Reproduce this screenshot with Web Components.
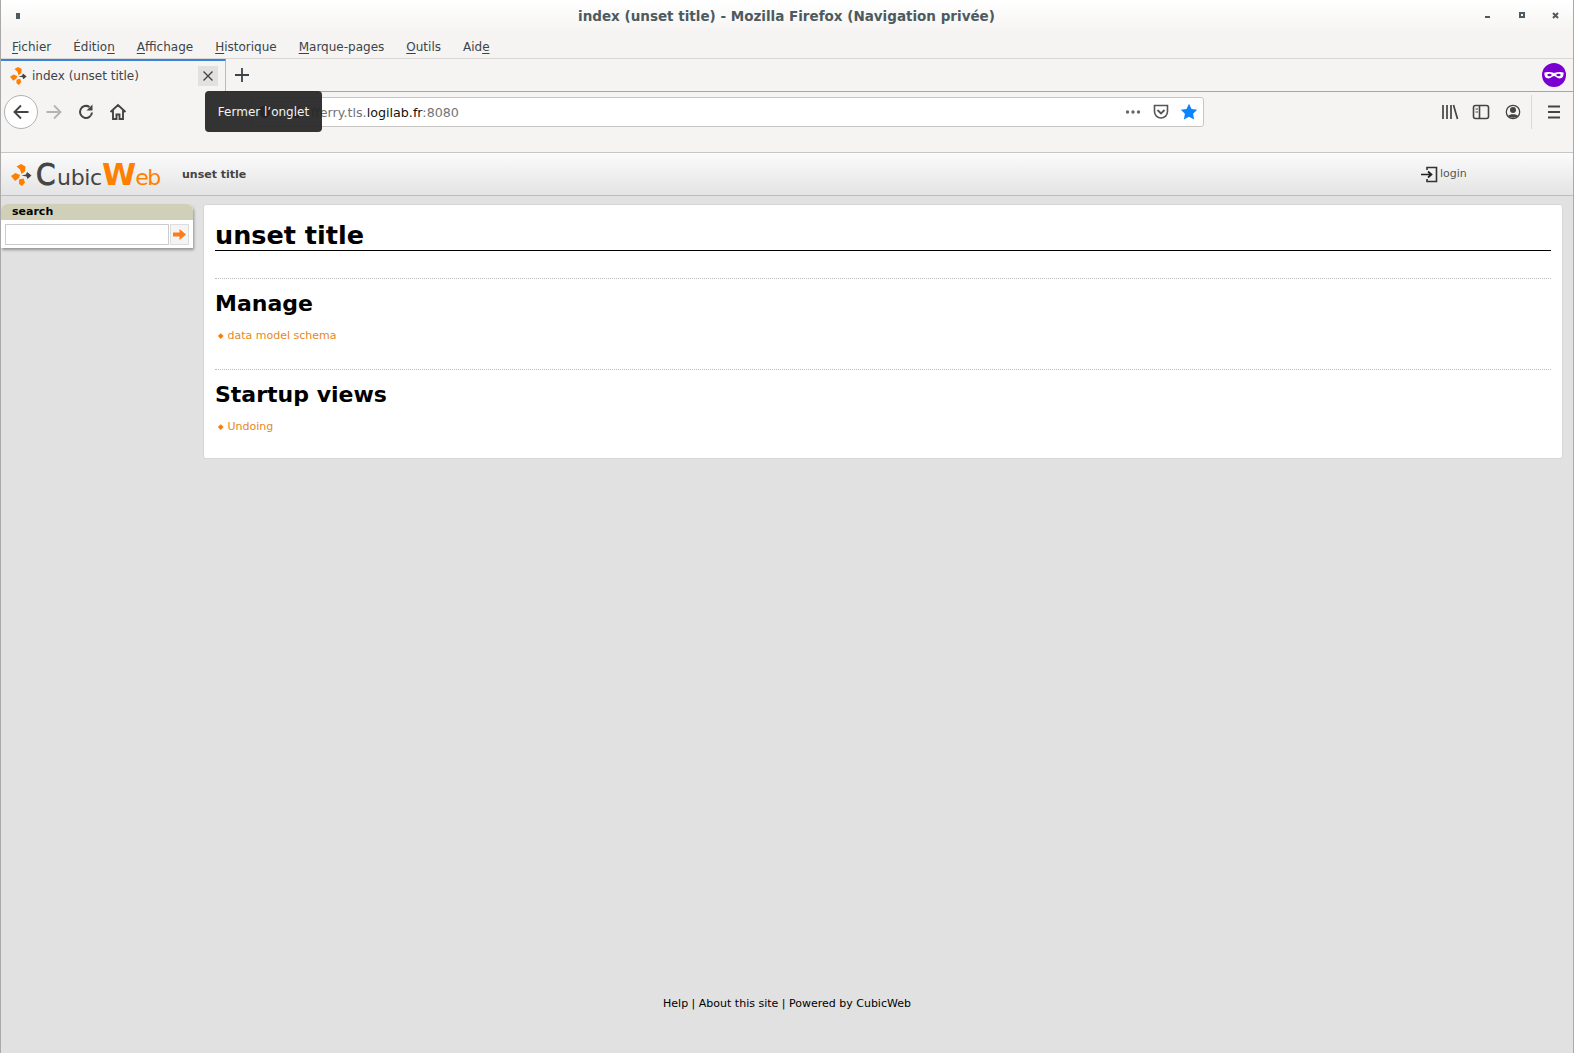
<!DOCTYPE html>
<html lang="fr"><head><meta charset="utf-8"><title>index (unset title)</title>
<style>
html,body{margin:0;height:100%;overflow:hidden}
body{font-family:"DejaVu Sans",sans-serif;background:#e0e0e0}
fx-window{height:1053px}
</style></head><body>
<fx-window>
  <fx-titlebar>index (unset title) - Mozilla Firefox (Navigation privée)</fx-titlebar>
  <fx-menubar></fx-menubar>
  <fx-tabbar></fx-tabbar>
  <fx-navbar></fx-navbar>
  <cw-page>
    <cw-header></cw-header>
    <cw-main>
      <cw-sidebox slot="side" heading="search"></cw-sidebox>
      <cw-content heading="unset title">
        <cw-section heading="Manage" link="data model schema"></cw-section>
        <cw-section heading="Startup views" link="Undoing"></cw-section>
      </cw-content>
    </cw-main>
    <cw-footer></cw-footer>
  </cw-page>
</fx-window>
<script>
const LOGO=`<path fill="#ff7f00" d="M5.500 2.500L10 0l4.500 2.500L14 7.500 10.500 10 9 5.500zM0 12l4.500-3L9 11l-1 3-4 3zM8 15.500l4.500-1 1.500 4-3 3.500-3-2z"/><path fill="#444" d="M10.500 11.500L15 10.500l1-2.500 4.500 3.500-4 3.500-1-2.500z"/>`;
function def(name,css,html){
  customElements.define(name,class extends HTMLElement{
    connectedCallback(){
      if(this.shadowRoot)return;
      const r=this.attachShadow({mode:'open'});
      r.innerHTML=`<style>${css}</style>${typeof html==='function'?html(this):html}`;
    }
  });
}
def('fx-window',`:host{display:flex;flex-direction:column;box-sizing:border-box;border-left:1px solid #a9a9a9;border-right:1px solid #a9a9a9;position:relative;width:1574px;overflow:hidden}`,`<slot></slot>`);
def('fx-titlebar',`:host{display:flex;align-items:center;justify-content:center;height:33px;flex:none;position:relative;background:linear-gradient(#fff,#f5f4f2);font:bold 13.5px "DejaVu Sans",sans-serif;color:#4d5a60;box-sizing:border-box;padding:0 1px 2px 0}
 .l{position:absolute;left:15px;top:13px;width:4px;height:6px;background:#4d5a60}
 .b{position:absolute;top:-1px;right:-1px;height:33px;display:flex}
 .b svg{width:34px;height:33px;display:block}`,
 `<span class="l"></span><slot></slot><span class="b">
 <svg viewBox="0 0 34 33"><rect x="14" y="17" width="5" height="2" fill="#4d5a60"/></svg>
 <svg viewBox="0 0 34 33"><path fill="none" stroke="#4d5a60" stroke-width="2" d="M15 14h4v4h-4z"/></svg>
 <svg viewBox="0 0 34 33" style="margin-left:1px"><path stroke="#4d5a60" stroke-width="2" d="M13 14l5 5m0-5l-5 5"/></svg></span>`);
def('fx-menubar',`:host{display:flex;height:26px;flex:none;background:#f5f4f2;font:12px "DejaVu Sans",sans-serif;color:#3c4449;padding:6px 0 0 11px;box-sizing:border-box;gap:22px;border-bottom:1px solid #d8d6d3;line-height:17px}
 u{text-underline-offset:2px}`,
 `<span><u>F</u>ichier</span><span>Éditio<u>n</u></span><span><u>A</u>ffichage</span><span><u>H</u>istorique</span><span><u>M</u>arque-pages</span><span><u>O</u>utils</span><span>Aid<u>e</u></span>`);
def('fx-tabbar',`:host{display:flex;height:33px;flex:none;background:#f5f4f2;border-bottom:1px solid #a5a5a5;box-sizing:border-box;font:12px "DejaVu Sans",sans-serif;color:#3c4449;position:relative}
 .tab{width:225px;box-sizing:border-box;height:33px;background:#f5f4f2;border-top:2px solid #3d82d9;border-right:1px solid #bdbbb8;display:flex;align-items:center;padding:0 7px 1px 9px;gap:5px;flex:none}
 .tab span{flex:1}
 .x{width:20px;height:20px;background:#e1e1e1;display:grid;place-items:center;border-radius:1px}
 .plus{margin:8px 0 0 8px;width:16px;height:16px;display:block}
 .mask{position:absolute;right:7px;top:4px;width:24px;height:24px;display:block}`,
 `<div class="tab"><svg width="17" height="18" viewBox="0 0 21 22">${LOGO}</svg><span>index (unset title)</span><div class="x"><svg width="12" height="12" viewBox="0 0 12 12"><path d="M1.500 1.500l9 9m0-9l-9 9" stroke="#444" stroke-width="1.400"/></svg></div></div>
 <svg class="plus" viewBox="0 0 16 16"><path d="M8 1v14M1 8h14" stroke="#3c4449" stroke-width="1.800"/></svg>
 <svg class="mask" viewBox="0 0 24 24"><circle cx="12" cy="12" r="12" fill="#7a00d1"/><path fill="#fff" d="M2.500 9.500c2.500-1 6.500-.5 9.500.5 3-1 7-1.500 9.500-.5.500 3-1 6-4 6-2.500 0-3.500-2.500-5.500-2.500s-3 2.500-5.500 2.500c-3 0-4.500-3-4-6z"/><ellipse cx="7.500" cy="12" rx="2.200" ry="1.300" fill="#7a00d1"/><ellipse cx="16.500" cy="12" rx="2.200" ry="1.300" fill="#7a00d1"/></svg>`);
def('fx-navbar',`:host{display:flex;align-items:flex-start;height:60px;flex:none;background:#f5f4f2;box-sizing:border-box;font:12.700px "DejaVu Sans",sans-serif;color:#3c4449;position:relative}
 .back{margin:3px 0 0 3px;width:34px;height:34px;box-sizing:border-box;border:1px solid #b1b1b1;border-radius:50%;background:#fff;display:grid;place-items:center;flex:none}
 .ic{width:18px;height:18px;display:block;flex:none;margin-top:11px}
 .url{margin:5px 0 0 124px;width:953px;height:30px;box-sizing:border-box;flex:none;background:#fff;border:1px solid #c8c6c3;border-radius:3px;display:flex;align-items:center;padding:0 5px 0 5px;color:#737373}
 .url b{font-weight:400;color:#111}
 .url .t{flex:1;margin-left:9px}
 .vs{width:1px;height:22px;background:#ddd;margin:0 6px}
 .right{display:flex;margin-left:auto;align-items:flex-start}
 .sep{width:1px;height:34px;background:#dcdad7;margin:3px 13px 0 9px;flex:none}
 .tip{position:absolute;left:204px;top:-1px;width:117px;height:41px;box-sizing:border-box;background:rgba(38,38,38,.94);border-radius:4px;color:#f2f2f2;display:flex;align-items:center;justify-content:center;font-size:12px;z-index:2}`,
 `<div class="back"><svg width="18" height="18" viewBox="0 0 18 18"><path d="M16.500 9H2.500M9 2.500L2.500 9l6.500 6.500" fill="none" stroke="#444" stroke-width="1.900"/></svg></div>
 <svg class="ic" style="margin-left:6px" viewBox="0 0 18 18"><path d="M16 9H2.500M10 2.500L16.500 9 10 15.500" fill="none" stroke="#b3b3b3" stroke-width="1.800"/></svg>
 <svg class="ic" style="margin-left:15px" viewBox="0 0 18 18"><path d="M15 9.500A6 6 0 1 1 12.500 4" fill="none" stroke="#444" stroke-width="2"/><path d="M15.500 1.500v6h-6z" fill="#444"/></svg>
 <svg class="ic" style="margin-left:14px" viewBox="0 0 18 18"><path d="M1.500 9L9 2l7.500 7M4 7.500V16h3.500v-4.500h3V16H14V7.500" fill="none" stroke="#444" stroke-width="1.900"/></svg>
 <div class="url">
  <svg width="16" height="16" viewBox="0 0 16 16" style="flex:none"><path d="M8 1.500l5.500 2v4c0 3.500-2.500 6-5.500 7-3-1-5.500-3.500-5.500-7v-4z" fill="#111"/></svg>
  <span class="vs" style="margin:0 6px 0 7px"></span>
  <svg width="15" height="16" viewBox="0 0 15 16" style="flex:none"><path d="M3 7h9v7H3z" fill="#111"/><path d="M2 14L13 2" stroke="#a01030" stroke-width="1.500"/></svg>
  <span class="t">fferry.tls.<b>logilab.fr</b>:8080</span>
  <svg width="18" height="18" viewBox="0 0 18 18" style="margin-right:10px"><circle cx="3.500" cy="9" r="1.700" fill="#666"/><circle cx="9" cy="9" r="1.700" fill="#666"/><circle cx="14.500" cy="9" r="1.700" fill="#666"/></svg>
  <svg width="18" height="18" viewBox="0 0 18 18" style="margin-right:10px"><path d="M2.500 2.500h13v6a6.500 6.500 0 0 1-13 0z" fill="none" stroke="#555" stroke-width="1.600"/><path d="M5.500 7L9 10.500 12.500 7" fill="none" stroke="#555" stroke-width="1.800"/></svg>
  <svg width="18" height="18" viewBox="0 0 18 18"><path fill="#0a84ff" d="M9 .8l2.500 5.200 5.700.8-4.100 4 1 5.700L9 13.800l-5.100 2.700 1-5.700-4.100-4 5.700-.8z"/></svg></div>
 <div class="right">
  <svg class="ic" viewBox="0 0 18 18"><path d="M2 2v14M6 2v14M10 2v14M12.500 2l4 14" stroke="#444" stroke-width="1.700"/></svg>
  <svg class="ic" style="margin-left:13px" viewBox="0 0 18 18"><rect x="1.500" y="2.500" width="15" height="13" rx="2" fill="none" stroke="#444" stroke-width="1.600"/><path d="M7.500 3v12" stroke="#444" stroke-width="1.600"/><path d="M3.500 6h2.500M3.500 9h2.500" stroke="#444"/></svg>
  <svg class="ic" style="margin-left:14px" viewBox="0 0 18 18"><circle cx="9" cy="9" r="6.700" fill="none" stroke="#444" stroke-width="1.300"/><circle cx="9" cy="7" r="3" fill="#444"/><path d="M4 13c1.500-2.500 8.500-2.500 10 0-2 2.300-8 2.300-10 0z" fill="#444"/></svg>
  <div class="sep"></div>
  <svg class="ic" style="margin-right:10px" viewBox="0 0 18 18"><path d="M3 3.500h12M3 9h12M3 14.500h12" stroke="#444" stroke-width="2"/></svg>
 </div>
 <div class="tip">Fermer l’onglet</div>`);
def('cw-page',`:host{display:flex;flex-direction:column;flex:1;min-height:0;background:#e1e1e1;font:11px "DejaVu Sans",sans-serif;color:#000}`,`<slot></slot>`);
def('cw-header',`:host{display:flex;align-items:center;height:44px;flex:none;box-sizing:border-box;background:linear-gradient(#fbfbfb,#e4e4e4);border-top:1px solid #c9c7c4;border-bottom:1px solid #bdbdbd;padding-left:10px;position:relative}
 .logo{display:block;flex:none;margin-top:2px}
 .word{font:400 22px/30px "DejaVu Sans",sans-serif;color:#444;margin-left:4px;display:flex;align-items:baseline;width:125px;flex:none;padding-top:3px;letter-spacing:-.3px}
 .c{font-size:31px;width:21px;display:inline-block;transform:scaleX(.9);transform-origin:0 50%;-webkit-text-stroke:.9px #444}
 .w{color:#ff7f00;letter-spacing:-1.500px}
 .W{color:#ff7f00;font-size:31px;font-weight:700;letter-spacing:-1px}
 .t{font:bold 11px "DejaVu Sans",sans-serif;color:#444;margin-left:21px;padding-top:1px}
 .login{position:absolute;left:1420px;top:13px;display:flex;align-items:center;gap:2px;color:#555;font:11px "DejaVu Sans",sans-serif}`,
 `<svg class="logo" width="21" height="22" viewBox="0 0 21 22">${LOGO}</svg><div class="word"><span class="c">C</span>ubic<span class="W">W</span><span class="w">eb</span></div><div class="t">unset title</div>
 <div class="login"><svg width="17" height="17" viewBox="0 0 17 17"><path d="M6 4V1.500h9.500v14H6V13" fill="none" stroke="#333" stroke-width="1.600"/><path d="M0 8.500h9.500M7 5.500l3.500 3-3.500 3" fill="none" stroke="#222" stroke-width="1.700"/></svg><span style="margin-bottom:3px">login</span></div>`);
def('cw-main',`:host{display:flex;align-items:flex-start;gap:10px;padding:8px 10px 0 0;box-sizing:border-box;flex:none;height:699px}`,`<slot name="side"></slot><slot></slot>`);
def('cw-sidebox',`:host{display:block;width:192px;flex:none;background:#fff;border-radius:6px 6px 0 0;box-shadow:1px 2px 3px rgba(0,0,0,.35);height:44px;font:bold 11px "DejaVu Sans",sans-serif;overflow:hidden}
 .h{background:#d0d0b8;height:16px;line-height:16px;padding-left:11px}
 .r{display:flex;padding:4px 4px 0 4px;gap:1px}
 .i{flex:1;height:21px;box-sizing:border-box;border:1px solid #ccc;background:#fff}
 .g{width:19px;height:21px;box-sizing:border-box;border:1px solid #ddd;background:#f4f4f4;display:grid;place-items:center;padding-right:1px}`,
 h=>`<div class="h">${h.getAttribute('heading')}</div><div class="r"><div class="i"></div><div class="g"><svg width="13" height="11" viewBox="0 0 13 11"><path fill="#ff7a1a" d="M0 3.500h6.500V0L13 5.500 6.500 11V7.500H0z"/></svg></div></div>`);
def('cw-content',`:host{display:block;flex:1;min-width:0;background:#fff;border:1px solid #d6d6d6;border-radius:3px;box-sizing:border-box;padding:12px 11px 0 11px;height:255px}
 h1{margin:0 0 27px;font:bold 25.500px/36px "DejaVu Sans",sans-serif;border-bottom:1px solid #000;height:33px}`,
 h=>`<h1>${h.getAttribute('heading')}</h1><slot></slot>`);
def('cw-section',`:host{display:block;border-top:1px dotted #bbb;height:91px;box-sizing:border-box;padding-top:12px}
 h2{margin:0 0 12px;font:bold 22px/26px "DejaVu Sans",sans-serif}
 .l{display:flex;align-items:center;padding-left:4px;gap:5px;color:#e8861c;font:11px/14px "DejaVu Sans",sans-serif}
 .d{width:3.500px;height:3.500px;background:#ff7a00;transform:rotate(45deg)}`,
 h=>`<h2>${h.getAttribute('heading')}</h2><div class="l"><span class="d"></span><span>${h.getAttribute('link')}</span></div>`);
def('cw-footer',`:host{display:block;text-align:center;font:11px "DejaVu Sans",sans-serif;color:#000;padding-top:102px}`,`Help | About this site | Powered by CubicWeb`);
</script>
</body></html>
